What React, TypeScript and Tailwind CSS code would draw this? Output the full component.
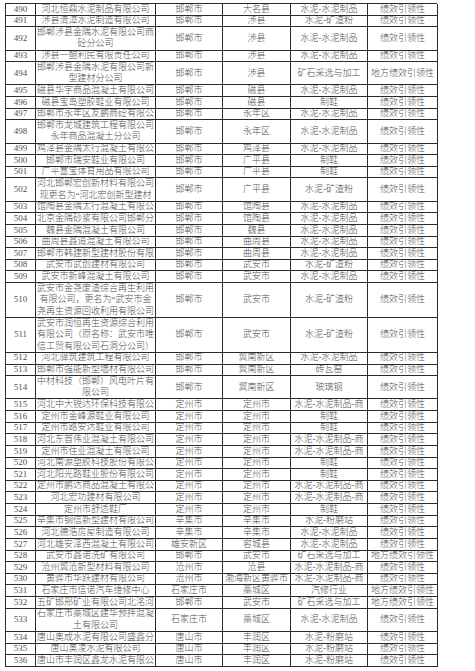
type Row = {
  no: string;
  name: string[];
  city: string;
  county: string;
  trade: string;
  level: string;
};

const A = "绩效引领性";
const B = "地方绩效引领性";

const rows: Row[] = [
  { no: "490", name: ["河北恒鼎水泥制品有限公司"], city: "邯郸市", county: "大名县", trade: "水泥-水泥制品", level: A },
  { no: "491", name: ["涉县清漳水泥制造有限公司"], city: "邯郸市", county: "涉县", trade: "水泥-矿渣粉", level: A },
  { no: "492", name: ["邯郸涉县金隅水泥有限公司商", "砼分公司"], city: "邯郸市", county: "涉县", trade: "水泥-水泥制品", level: A },
  { no: "493", name: ["涉县一鲍利民有限责任公司"], city: "邯郸市", county: "涉县", trade: "水泥-水泥制品", level: A },
  { no: "494", name: ["邯郸涉县金隅水泥有限公司新", "型建材分公司"], city: "邯郸市", county: "涉县", trade: "矿石采选与加工", level: B },
  { no: "495", name: ["磁县华宇商品混凝土有限公司"], city: "邯郸市", county: "磁县", trade: "水泥-水泥制品", level: A },
  { no: "496", name: ["磁县宝岛塑胶鞋业有限公司"], city: "邯郸市", county: "磁县", trade: "制鞋", level: A },
  { no: "497", name: ["邯郸市永年区友鹏商砼有限公"], city: "邯郸市", county: "永年区", trade: "水泥-水泥制品", level: A },
  { no: "498", name: ["邯郸市龙城建筑工程有限公司", "永年商品混凝土分公司"], city: "邯郸市", county: "永年区", trade: "水泥-水泥制品", level: A },
  { no: "499", name: ["鸡泽县金隅太行混凝土有限公"], city: "邯郸市", county: "鸡泽县", trade: "水泥-水泥制品", level: A },
  { no: "500", name: ["邯郸市瑞安鞋业有限公司"], city: "邯郸市", county: "广平县", trade: "制鞋", level: A },
  { no: "501", name: ["广平富宝体育用品有限公司"], city: "邯郸市", county: "广平县", trade: "制鞋", level: A },
  { no: "502", name: ["河北邯郸宏创新材料有限公司", "现更名为\u201c河北宏创新型建材"], city: "邯郸市", county: "广平县", trade: "水泥-矿渣粉", level: A },
  { no: "503", name: ["馆陶县金隅太行混凝土有限公"], city: "邯郸市", county: "馆陶县", trade: "水泥-水泥制品", level: A },
  { no: "504", name: ["北京金隅砂浆有限公司邯郸分"], city: "邯郸市", county: "馆陶县", trade: "水泥-水泥制品", level: A },
  { no: "505", name: ["魏县金隅混凝土有限公司"], city: "邯郸市", county: "魏县", trade: "水泥-水泥制品", level: A },
  { no: "506", name: ["曲周县鑫道混凝土有限公司"], city: "邯郸市", county: "曲周县", trade: "水泥-水泥制品", level: A },
  { no: "507", name: ["邯郸市韩建新型建材股份有限"], city: "邯郸市", county: "曲周县", trade: "水泥-水泥制品", level: A },
  { no: "508", name: ["武安市武创建材有限公司"], city: "邯郸市", county: "武安市", trade: "水泥-矿渣粉", level: A },
  { no: "509", name: ["武安市新峰混凝土有限公司"], city: "邯郸市", county: "武安市", trade: "水泥-水泥制品", level: A },
  { no: "510", name: ["武安市金尧废渣综合再生利用", "有限公司，更名为\u201c武安市金", "尧再生资源回收利用有限公司"], city: "邯郸市", county: "武安市", trade: "水泥-矿渣粉", level: A },
  { no: "511", name: ["武安市润恒再生资源综合利用", "有限公司（原名称：武安市唯", "信工贸有限公司石洞分公司）"], city: "邯郸市", county: "武安市", trade: "水泥-矿渣粉", level: A },
  { no: "512", name: ["河北驿筑建筑工程有限公司"], city: "邯郸市", county: "冀南新区", trade: "水泥-水泥制品", level: A },
  { no: "513", name: ["邯郸市强能新型墙材有限公司"], city: "邯郸市", county: "冀南新区", trade: "砖瓦窑", level: A },
  { no: "514", name: ["中材科技（邯郸）风电叶片有", "限公司"], city: "邯郸市", county: "冀南新区", trade: "玻璃钢", level: A },
  { no: "515", name: ["河北中大锐达环保科技有限公"], city: "定州市", county: "定州市", trade: "水泥-水泥制品-商", level: A },
  { no: "516", name: ["定州市金峰源鞋业有限公司"], city: "定州市", county: "定州市", trade: "制鞋", level: A },
  { no: "517", name: ["定州市路安达鞋业有限公司"], city: "定州市", county: "定州市", trade: "制鞋", level: A },
  { no: "518", name: ["河北东首伟业混凝土有限公司"], city: "定州市", county: "定州市", trade: "水泥-水泥制品-商", level: A },
  { no: "519", name: ["定州市住业混凝土有限公司"], city: "定州市", county: "定州市", trade: "水泥-水泥制品-商", level: A },
  { no: "520", name: ["河北南源塑胶科技股份有限公"], city: "定州市", county: "定州市", trade: "制鞋", level: A },
  { no: "521", name: ["河北阳光路鞋业股份有限公司"], city: "定州市", county: "定州市", trade: "制鞋", level: A },
  { no: "522", name: ["定州市鹏达商品混凝土有限公"], city: "定州市", county: "定州市", trade: "水泥-水泥制品-商", level: A },
  { no: "523", name: ["河北宏功建材有限公司"], city: "定州市", county: "定州市", trade: "水泥-水泥制品-商", level: A },
  { no: "524", name: ["定州市舒适鞋厂"], city: "定州市", county: "定州市", trade: "制鞋", level: A },
  { no: "525", name: ["辛集市钢信新型建材有限公司"], city: "辛集市", county: "辛集市", trade: "水泥-粉磨站", level: A },
  { no: "526", name: ["河北德浩房屋制造有限公司"], city: "辛集市", county: "辛集市", trade: "水泥-水泥制品", level: A },
  { no: "527", name: ["河北雄安泽西混凝土有限公司"], city: "雄安新区", county: "容城县", trade: "水泥-水泥制品", level: A },
  { no: "528", name: ["武安市鑫诺洗矿有限公司"], city: "邯郸市", county: "武安市", trade: "矿石采选与加工", level: B },
  { no: "529", name: ["沧州冀沧新型材料有限公司"], city: "沧州市", county: "沧县", trade: "水泥-水泥制品-商", level: A },
  { no: "530", name: ["黄骅市华跃建材有限公司"], city: "沧州市", county: "渤海新区黄骅市", trade: "水泥-水泥制品-商", level: A },
  { no: "531", name: ["石家庄市信诺汽车维修中心"], city: "石家庄市", county: "藁城区", trade: "汽修行业", level: B },
  { no: "532", name: ["五矿邯邢矿业有限公司北洺河"], city: "邯郸市", county: "武安市", trade: "矿石采选与加工", level: B },
  { no: "533", name: ["石家庄市藁城区建华预拌混凝", "土有限公司"], city: "石家庄市", county: "藁城区", trade: "水泥-水泥制品", level: A },
  { no: "534", name: ["唐山奥成水泥有限公司盛鑫分"], city: "唐山市", county: "丰润区", trade: "水泥-粉磨站", level: A },
  { no: "535", name: ["唐山奥凌水泥有限公司"], city: "唐山市", county: "丰润区", trade: "水泥-粉磨站", level: A },
  { no: "536", name: ["唐山市丰润区鑫龙水泥有限公"], city: "唐山市", county: "丰润区", trade: "水泥-粉磨站", level: A },
];

const heights: Record<number, string> = {
  1: "h-[11.64px]",
  2: "h-[23.28px]",
  3: "h-[34.92px]",
};

const cell =
  "flex items-center justify-center overflow-hidden whitespace-nowrap border-r border-b border-[#2a2a2a]";

export default function App() {
  return (
    <div
      className="min-h-[671px] bg-white pl-[5px] pt-[3px] text-[9px] font-light leading-[11.4px] text-[#505050]"
      style={{ fontFamily: '"Liberation Serif", "Noto Sans CJK SC", serif' }}
    >
      <div className="w-[432px] border-l border-t border-[#2a2a2a]">
        {rows.map((r) => (
          <div
            key={r.no}
            className={`grid grid-cols-[30px_120px_67px_68px_77px_70px] ${heights[r.name.length]}`}
          >
            <div className={cell}>{r.no}</div>
            <div className={`${cell} flex-col`}>
              {r.name.map((line) => (
                <span key={line}>{line}</span>
              ))}
            </div>
            <div className={cell}>{r.city}</div>
            <div className={cell}>{r.county}</div>
            <div className={cell}>{r.trade}</div>
            <div className={cell}>{r.level}</div>
          </div>
        ))}
      </div>
    </div>
  );
}
